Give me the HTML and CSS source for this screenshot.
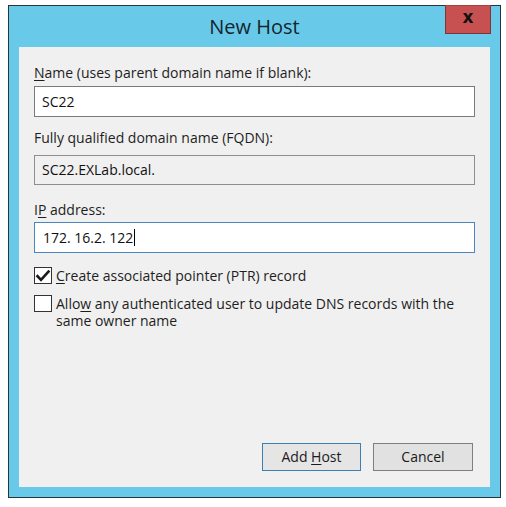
FILE: index.html
```html
<!DOCTYPE html>
<html>
<head>
<meta charset="utf-8">
<link rel="stylesheet" href="styles.css">
</head>
<body>
<div class="window">
  <div class="titlebar">
    <div class="title">New Host</div>
    <div class="close">x</div>
  </div>
  <div class="panel">
    <div class="label l1"><u>N</u>ame (uses parent domain name if blank):</div>
    <div class="input i1">SC22</div>
    <div class="label l2">Fully qualified domain name (FQDN):</div>
    <div class="input readonly i2">SC22.EXLab.local.</div>
    <div class="label l3">I<u>P</u> address:</div>
    <div class="input focus i3">172. 16.2. 122<span class="caret"></span></div>
    <div class="check c1">
      <span class="box"><svg width="16" height="16" viewBox="0 0 16 16"><path d="M2.5 8.2 L6 11.8 L13.5 3.5" fill="none" stroke="#1a1a1a" stroke-width="2.6" stroke-linecap="square"/></svg></span>
      <span class="ctext"><u>C</u>reate associated pointer (PTR) record</span>
    </div>
    <div class="check c2">
      <span class="box"></span>
      <span class="ctext">Allo<u>w</u> any authenticated user to update DNS records with the same owner name</span>
    </div>
    <div class="buttons">
      <div class="btn default">Add <u>H</u>ost</div>
      <div class="btn">Cancel</div>
    </div>
  </div>
</div>
</body>
</html>
```

FILE: styles.css
```css
html, body {
  margin: 0;
  padding: 0;
  background: #ffffff;
}
body {
  width: 506px;
  height: 507px;
  font-family: "Open Sans", "Noto Sans", sans-serif;
  font-size: 14px;
  color: #1e1e1e;
}
.window {
  margin: 5px 0 0 8px;
  width: 493px;
  height: 493px;
  box-sizing: border-box;
  border: 1px solid #26353d;
  background: #69c9e9;
  display: flex;
  flex-direction: column;
}
.titlebar {
  height: 41px;
  display: grid;
  grid-template-columns: 1fr auto 1fr;
}
.title {
  grid-column: 2;
  align-self: center;
  font-size: 20px;
  color: #15252e;
  line-height: 24px;
  padding-top: 1px;
}
.close {
  grid-column: 3;
  justify-self: end;
  align-self: start;
  margin-top: -1px;
  margin-right: 9px;
  width: 46px;
  height: 29px;
  box-sizing: border-box;
  background: #c75050;
  border: 1px solid #7e3535;
  border-top-color: #a24444;
  color: #111;
  font-weight: bold;
  font-size: 17px;
  line-height: 23px;
  text-align: center;
  font-family: "DejaVu Sans", sans-serif;
}
.panel {
  margin: 0 10px 10px 10px;
  flex: 1;
  background: #f0f0f0;
  padding: 17px 15px 16px 15px;
  display: flex;
  flex-direction: column;
}
.label {
  line-height: 18px;
  height: 18px;
  white-space: nowrap;
}
u {
  text-decoration: underline;
  text-decoration-thickness: 1px;
  text-underline-offset: 2px;
}
.l2 { margin-top: 12px; }
.l3 { margin-top: 16px; }
.input {
  height: 31px;
  box-sizing: border-box;
  border: 1px solid #7a7a7a;
  background: #ffffff;
  padding: 0 7px;
  display: flex;
  align-items: center;
  line-height: 18px;
  color: #111;
}
.i1 { margin-top: 4px; }
.i2 { margin-top: 8px; background: #f0f0f0; height: 30px; border-color: #8e8e8e; }
.i3 { margin-top: 3px; padding-left: 8px; }
.focus { border-color: #4a86c0; }
.caret {
  display: inline-block;
  width: 1px;
  height: 17px;
  background: #000;
  margin-left: 1px;
}
.check {
  display: flex;
  align-items: flex-start;
  gap: 4px;
}
.c1 { margin-top: 14px; align-items: center; }
.c2 { margin-top: 11px; }
.box {
  flex: none;
  width: 18px;
  height: 17px;
  box-sizing: border-box;
  border: 1px solid #333333;
  background: #ffffff;
  display: flex;
  align-items: center;
  justify-content: center;
}
.ctext {
  line-height: 17px;
  width: 420px;
}
.buttons {
  margin-top: auto;
  display: flex;
  justify-content: flex-end;
  gap: 12px;
  padding-right: 2px;
}
.btn {
  width: 100px;
  height: 28px;
  box-sizing: border-box;
  border: 1px solid #7f7f7f;
  background: #e1e1e1;
  text-align: center;
  line-height: 26px;
  color: #1a1a1a;
}
.default {
  width: 99px;
  border-color: #3c7fb1;
  background: #e5e5e5;
}
```
